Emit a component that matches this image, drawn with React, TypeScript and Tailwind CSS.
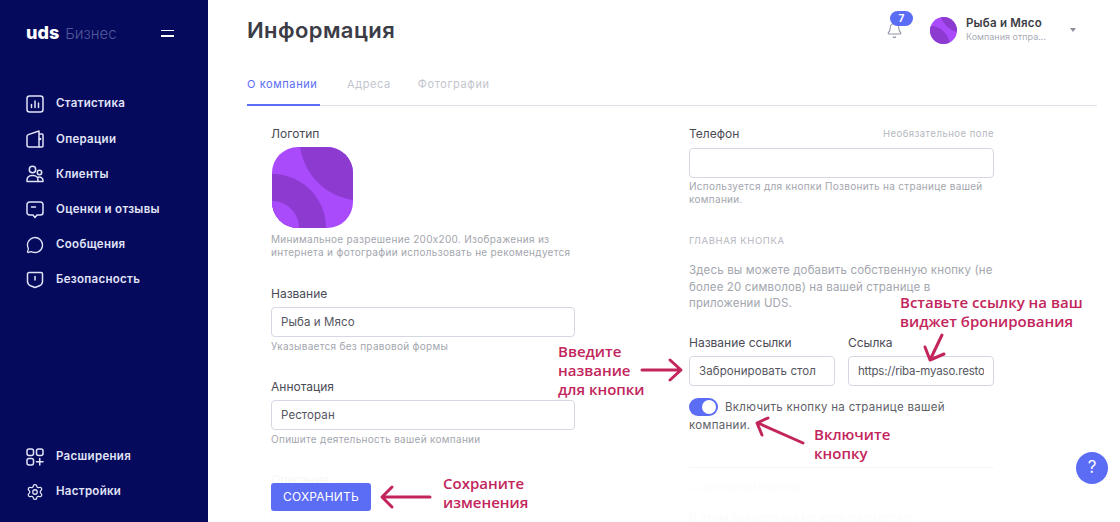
import { Bell, MessageCircle, Settings } from 'lucide-react';

const topNav = [
  { label: 'Статистика', icon: <StatsIcon /> },
  { label: 'Операции', icon: <WalletIcon /> },
  { label: 'Клиенты', icon: <ClientsIcon /> },
  { label: 'Оценки и отзывы', icon: <ReviewIcon /> },
  { label: 'Сообщения', icon: <MessageCircle size={18} strokeWidth={1.8} /> },
  { label: 'Безопасность', icon: <ShieldIcon /> },
];

const bottomNav = [
  { label: 'Расширения', icon: <ExtIcon /> },
  { label: 'Настройки', icon: <Settings size={18} strokeWidth={1.7} /> },
];

function StatsIcon() {
  return (
    <svg width="18" height="18" viewBox="0 0 18 18" fill="none" stroke="currentColor" strokeWidth="1.5" strokeLinecap="round">
      <rect x="1" y="1" width="16" height="16" rx="2.5" />
      <path d="M5.5 9.5v3M9 6v6.5M12.5 8v4.5" />
    </svg>
  );
}

function WalletIcon() {
  return (
    <svg width="18" height="18" viewBox="0 0 18 18" fill="none" stroke="currentColor" strokeWidth="1.5" strokeLinejoin="round">
      <path d="M1 6.500a2 2 0 0 1 1.300-1.900L13 1v16H3a2 2 0 0 1-2-2z" />
      <path d="M13 4h3a1 1 0 0 1 1 1v11a1 1 0 0 1-1 1h-3" />
      <circle cx="14" cy="9" r=".6" />
    </svg>
  );
}

function ClientsIcon() {
  return (
    <svg width="18" height="18" viewBox="0 0 18 18" fill="none" stroke="currentColor" strokeWidth="1.5" strokeLinecap="round" strokeLinejoin="round">
      <circle cx="6.500" cy="4.500" r="3.200" />
      <circle cx="13.500" cy="7.500" r="2.200" />
      <path d="M1 16.500v-1.500a4.500 4.500 0 0 1 4.500-4.500h2a4.500 4.500 0 0 1 4.500 4.500v1.500z" />
      <path d="M12 16.500h5v-1a3.500 3.500 0 0 0-5-3.200" />
    </svg>
  );
}

function ReviewIcon() {
  return (
    <svg width="18" height="18" viewBox="0 0 18 18" fill="none" stroke="currentColor" strokeWidth="1.5" strokeLinecap="round" strokeLinejoin="round">
      <path d="M3.500 1h11A2.500 2.500 0 0 1 17 3.500v8a2.500 2.500 0 0 1-2.500 2.500H11l-2 2.500L7 14H3.500A2.500 2.500 0 0 1 1 11.500v-8A2.500 2.500 0 0 1 3.500 1z" />
      <path d="M5.500 6h4" />
    </svg>
  );
}

function ShieldIcon() {
  return (
    <svg width="18" height="18" viewBox="0 0 18 18" fill="none" stroke="currentColor" strokeWidth="1.5" strokeLinecap="round" strokeLinejoin="round">
      <path d="M3 1.500h12a1.500 1.500 0 0 1 1.500 1.500v7.500c0 2.500-1.500 3.500-3 4.200L9 16.500l-4.500-1.800c-1.500-.7-3-1.700-3-4.200V3A1.500 1.500 0 0 1 3 1.500z" />
      <path d="M9 5.500v3.500" />
    </svg>
  );
}

function ExtIcon() {
  return (
    <svg width="18" height="18" viewBox="0 0 18 18" fill="none" stroke="currentColor" strokeWidth="1.5" strokeLinecap="round">
      <rect x="1" y="1" width="6.500" height="6.500" rx="2" />
      <rect x="10.500" y="1" width="6.500" height="6.500" rx="2" />
      <rect x="1" y="10.500" width="6.500" height="6.500" rx="2" />
      <path d="M13.750 10.500v6.500M10.500 13.750H17" />
    </svg>
  );
}

function LogoMark() {
  return (
    <svg width="81" height="81" viewBox="0 0 81 81">
      <defs>
        <clipPath id="logoClip">
          <rect width="81" height="81" rx="26" />
        </clipPath>
      </defs>
      <g clipPath="url(#logoClip)">
        <rect width="81" height="81" fill="#a94bfb" />
        <path d="M28 0C33 30 55 49 81 53V0z" fill="#8c3ad0" />
        <path d="M0 27C30 27 54 51 54 81H0z" fill="#8c3ad0" />
        <path d="M0 54C15 54 27 66 27 81H0z" fill="#a94bfb" />
      </g>
    </svg>
  );
}

function Arrow({ d, className }: { d: string; className: string }) {
  return (
    <svg className={`absolute h-[50px] w-[50px] overflow-visible ${className}`} viewBox="0 0 50 50" fill="none" stroke="#c2255c" strokeWidth="3" strokeLinecap="round" strokeLinejoin="round">
      <path d={d} />
    </svg>
  );
}

function Label({ children }: { children: string }) {
  return <div className="text-[12px] leading-[15px] text-[#4a4a55]">{children}</div>;
}

function Hint({ children }: { children: string }) {
  return <div className="text-[10px] leading-[13px] tracking-[0.3px] text-[#a3a6ae]">{children}</div>;
}

function Field({ value, className = '' }: { value: string; className?: string }) {
  return (
    <div className={`h-[30px] rounded-[4px] border border-[#d5d8e2] px-[9px] text-[11.500px] leading-[28px] text-[#55555f] ${className}`}>
      <div className="overflow-hidden whitespace-nowrap">{value}</div>
    </div>
  );
}

export default function App() {
  return (
    <div className="relative flex h-[522px] w-[1120px] overflow-hidden bg-white font-['Inter','Liberation_Sans',sans-serif]">
      <aside className="flex w-[208px] shrink-0 flex-col bg-[#050a5c] pb-[21px] pl-[26px] text-[#e1e4f8]">
        <div className="flex h-[66px] items-center">
          <span className="text-[18px] font-extrabold leading-none text-white">uds</span>
          <span className="ml-[6px] text-[15px] font-light leading-none text-[#54589a]">Бизнес</span>
          <span className="ml-[44px] flex w-[13px] flex-col gap-[4px]">
            <span className="h-[1.500px] bg-white" />
            <span className="h-[1.500px] bg-white" />
          </span>
        </div>
        <nav className="mt-[29px] flex flex-col gap-[17.200px]">
          {topNav.map(item => (
            <div key={item.label} className="flex h-[18px] items-center gap-[12px]">
              {item.icon}
              <span className="text-[11.500px] font-semibold tracking-[0.3px]">{item.label}</span>
            </div>
          ))}
        </nav>
        <div className="mt-auto flex flex-col gap-[17px]">
          {bottomNav.map(item => (
            <div key={item.label} className="flex h-[18px] items-center gap-[12px]">
              {item.icon}
              <span className="text-[11.500px] font-semibold tracking-[0.3px]">{item.label}</span>
            </div>
          ))}
        </div>
      </aside>

      <main className="min-w-0 flex-1 pl-[39px] pr-[23px]">
        <header className="flex h-[60px] items-center">
          <h1 className="text-[22px] font-semibold tracking-[0.4px] text-[#3c3c46]">Информация</h1>
          <div className="relative ml-auto mr-[27px] mt-[1px] text-[#8f93a3]">
            <Bell size={17} strokeWidth={1.500} />
            <span className="absolute -top-[11px] left-[4px] flex h-[15px] w-[23px] items-center justify-center rounded-full bg-[#5b6cf5] text-[10px] font-bold text-white">7</span>
          </div>
          <div className="h-[27px] w-[27px] overflow-hidden rounded-full">
            <svg width="27" height="27" viewBox="0 0 27 27">
              <rect width="27" height="27" fill="#a94bfb" />
              <path d="M0 9C10 9 18 16 20 27H0z" fill="#8c3ad0" />
              <path d="M11 0C13 7 19 13 27 15V0z" fill="#8c3ad0" />
            </svg>
          </div>
          <div className="ml-[9px] w-[104px]">
            <div className="text-[11.500px] font-semibold leading-[14px] tracking-[0.2px] text-[#3c3c46]">Рыба и Мясо</div>
            <div className="text-[9px] leading-[14px] text-[#a9acb6]">Компания отпра...</div>
          </div>
          <span className="mr-[21px] h-0 w-0 border-x-[3.500px] border-t-[4px] border-x-transparent border-t-[#8b8f9e]" />
        </header>

        <div className="flex h-[46px] gap-[27px] border-b border-[#dfe1e8] text-[11px] leading-[15px] tracking-[0.6px]">
          <div className="h-[46px] w-[73px] border-b-2 border-[#5b6cf5] pt-[17px] text-[#5b6cf5]">О компании</div>
          <div className="pt-[17px] text-[#c3c5cf]">Адреса</div>
          <div className="pt-[17px] text-[#c3c5cf]">Фотографии</div>
        </div>

        <div className="ml-[24px] flex gap-[114px] pt-[20px]">
          <section className="w-[304px]">
            <Label>Логотип</Label>
            <div className="ml-px mt-[6px] h-[81px]"><LogoMark /></div>
            <div className="mt-[5px]">
              <Hint>Минимальное разрешение 200х200. Изображения из интернета и фотографии использовать не рекомендуется</Hint>
            </div>
            <div className="mt-[27px]"><Label>Название</Label></div>
            <Field value="Рыба и Мясо" className="mt-[6px] tracking-[0.1px]" />
            <div className="mt-[3px]"><Hint>Указывается без правовой формы</Hint></div>
            <div className="mt-[26px]"><Label>Аннотация</Label></div>
            <Field value="Ресторан" className="mt-[6px] tracking-[0.1px]" />
            <div className="mt-[3px]"><Hint>Опишите деятельность вашей компании</Hint></div>
            <div className="mt-[26px]"><Label>Описание</Label></div>
            <div className="mt-[7px] h-[60px] rounded-[4px] border border-[#d5d8e2]" />
          </section>

          <section className="w-[305px]">
            <div className="flex items-center justify-between">
              <Label>Телефон</Label>
              <span className="text-[9.500px] leading-[15px] tracking-[0.5px] text-[#b5b7c0]">Необязательное поле</span>
            </div>
            <div className="mt-[7px] h-[30px] rounded-[4px] border border-[#d5d8e2]" />
            <div className="mt-[2px]"><Hint>Используется для кнопки Позвонить на странице вашей компании.</Hint></div>
            <div className="mt-[28px] text-[9.500px] leading-[13px] tracking-[0.6px] text-[#b5b7c0]">ГЛАВНАЯ КНОПКА</div>
            <p className="mt-[15px] w-[305px] text-[11.500px] leading-[16.500px] tracking-[0.15px] text-[#a3a6ae]">Здесь вы можете добавить собственную кнопку (не более 20 символов) на вашей странице в приложении UDS.</p>
            <div className="mt-[23px] flex gap-[13px]">
              <div className="w-[146px]">
                <Label>Название ссылки</Label>
                <Field value="Забронировать стол" className="mt-[6px] tracking-[0.1px]" />
              </div>
              <div className="w-[146px]">
                <Label>Ссылка</Label>
                <Field value="https://riba-myaso.restoran.ru" className="mt-[6px] tracking-[-0.2px]" />
              </div>
            </div>
            <div className="mt-[12px] w-[290px] text-[11.500px] leading-[18px] tracking-[0.3px] text-[#5f5f69]">
              <span className="relative mr-[7px] inline-block h-[18px] w-[29px] rounded-full bg-[#5b6cf5] align-top">
                <span className="absolute right-[2px] top-[2px] h-[14px] w-[14px] rounded-full bg-white" />
              </span>
              Включить кнопку на странице вашей компании.
            </div>
            <div className="mt-[33px] border-t border-[#dfe1e8] pt-[13px] text-[9.500px] leading-[13px] tracking-[0.6px] text-[#b5b7c0]">ССЫЛКИ КОМПАНИИ</div>
            <p className="mt-[16px] text-[11.500px] leading-[16.500px] tracking-[0.15px] text-[#a3a6ae]">В этом разделе вы можете разместить</p>
          </section>
        </div>
      </main>

      <div className="absolute bottom-0 left-[208px] right-0 h-[77px] bg-gradient-to-b from-white/0 via-white/95 via-40% to-white/95" />

      <button className="absolute left-[271px] top-[483px] h-[28px] w-[100px] rounded-[3px] bg-[#5b6cf5] text-[12px] tracking-[0.2px] text-white">СОХРАНИТЬ</button>
      <div className="absolute bottom-[38px] right-[12px] flex h-[32px] w-[32px] items-center justify-center rounded-full bg-[#5b6cf5] text-[17px] font-normal text-white">?</div>

      <div className="absolute left-[443px] top-[474px] font-['Open_Sans',sans-serif] text-[15px] font-semibold leading-[19px] text-[#c2255c]">Сохраните<br />изменения</div>
      <div className="absolute left-[558px] top-[342px] font-['Open_Sans',sans-serif] text-[15px] font-semibold leading-[19px] text-[#c2255c]">Введите<br />название<br />для кнопки</div>
      <div className="absolute left-[900px] top-[293px] font-['Open_Sans',sans-serif] text-[15px] font-semibold leading-[19px] text-[#c2255c]">Вставьте ссылку на ваш<br />виджет бронирования</div>
      <div className="absolute left-[814px] top-[425px] font-['Open_Sans',sans-serif] text-[15px] font-semibold leading-[19px] text-[#c2255c]">Включите<br />кнопку</div>

      <Arrow className="left-[381px] top-[472px]" d="M49 25H2M11 15L1 25l10 10" />
      <Arrow className="left-[640px] top-[345px]" d="M2 25h38M30 15l11 10-11 10" />
      <Arrow className="left-[909px] top-[335px]" d="M33 0L21 25M16 12l5 13 14-6" />
      <Arrow className="left-[750px] top-[410px]" d="M53 33L8 13M18 8L7 13l5 12" />
    </div>
  );
}
